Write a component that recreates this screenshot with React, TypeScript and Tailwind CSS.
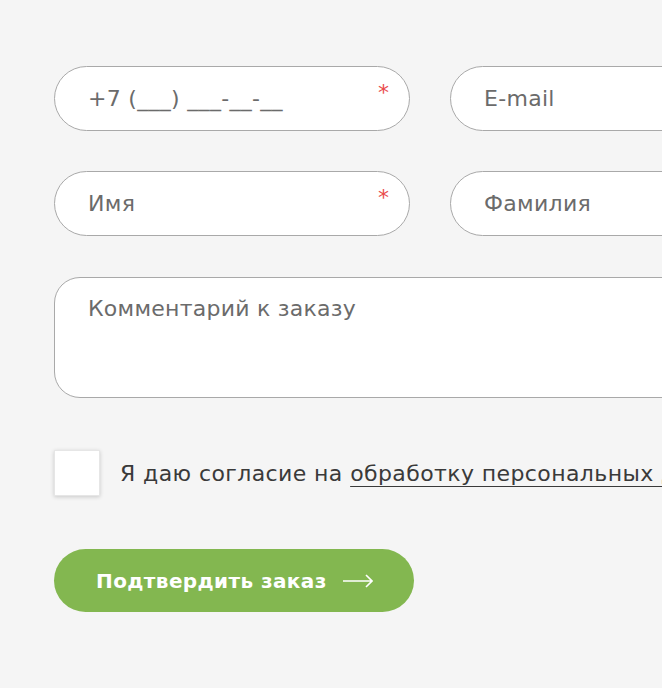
import React from 'react';

const font = { fontFamily: '"DejaVu Sans", "Noto Sans", sans-serif' };

const Field = ({ placeholder, required }: { placeholder: string; required?: boolean }) => (
    <div className="relative flex h-[65px] w-[356px] shrink-0 items-center rounded-full border-[1.5px] border-[#a9a9a9] bg-white pl-[33px]">
        <span className="text-[22px] tracking-[0.3px] text-[#6b6b6b]">{placeholder}</span>
        {required && <span className="absolute right-[20px] top-[9px] text-[22px] text-[#e94b4b]">*</span>}
    </div>
);

export default function App() {
    return (
        <div className="min-h-[688px] w-[662px] overflow-hidden bg-[#f5f5f5] pl-[54px] pt-[66px]" style={font}>
            <div className="flex w-[752px] flex-col">
                <div className="flex gap-[40px]">
                    <Field placeholder="+7 (___) ___-__-__" required />
                    <Field placeholder="E-mail" />
                </div>
                <div className="mt-[40px] flex gap-[40px]">
                    <Field placeholder="Имя" required />
                    <Field placeholder="Фамилия" />
                </div>
                <div className="mt-[41px] h-[121px] rounded-[26px] border-[1.5px] border-[#a9a9a9] bg-white pl-[33px] pt-[14px]">
                    <span className="text-[22px] tracking-[0.25px] text-[#6b6b6b]">Комментарий к заказу</span>
                </div>
                <div className="mt-[52px] flex items-center gap-[20px]">
                    <div className="h-[46px] w-[46px] border border-[#e6e6e6] bg-white shadow-[0_1px_4px_rgba(0,0,0,0.18)]" />
                    <span className="whitespace-nowrap text-[22px] tracking-[0.4px] text-[#3a3a3a]">
                        Я даю согласие на <span className="underline decoration-1 underline-offset-[5px] [text-decoration-skip-ink:none]">обработку персональных данных</span>
                    </span>
                </div>
                <button className="mt-[53px] flex h-[63px] w-[360px] items-center rounded-full bg-[#83b750] pl-[42px] text-[20px] font-bold tracking-[0.4px] text-white">
                    Подтвердить заказ
                    <svg className="ml-[16px] h-[14px] w-[30px]" viewBox="0 0 30 14" fill="none" stroke="white" strokeWidth={1.6}>
                        <path d="M0 7h29M23 1l6 6-6 6" />
                    </svg>
                </button>
            </div>
        </div>
    );
}
